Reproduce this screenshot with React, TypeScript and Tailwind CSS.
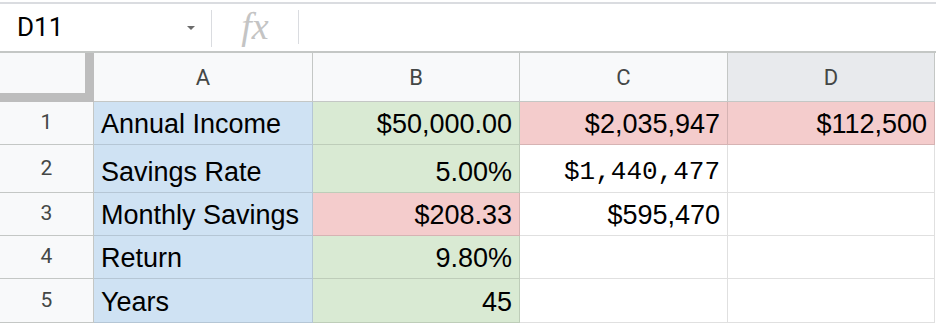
import React from 'react';

type Cell = {
  text?: string;
  bg?: string;
  align?: 'left' | 'right';
  mono?: boolean;
};

const colWidths = ['w-[219px]', 'w-[207px]', 'w-[208px]', 'w-[207px]'];
const rowHeights = ['h-[43px]', 'h-[48px]', 'h-[43px]', 'h-[43px]', 'h-[44px]'];

const rows: Cell[][] = [
  [
    { text: 'Annual Income', bg: 'bg-[#cfe2f3]' },
    { text: '$50,000.00', bg: 'bg-[#d9ead3]', align: 'right' },
    { text: '$2,035,947', bg: 'bg-[#f4cccc]', align: 'right' },
    { text: '$112,500', bg: 'bg-[#f4cccc]', align: 'right' },
  ],
  [
    { text: 'Savings Rate', bg: 'bg-[#cfe2f3]' },
    { text: '5.00%', bg: 'bg-[#d9ead3]', align: 'right' },
    { text: '$1,440,477', align: 'right', mono: true },
    {},
  ],
  [
    { text: 'Monthly Savings', bg: 'bg-[#cfe2f3]' },
    { text: '$208.33', bg: 'bg-[#f4cccc]', align: 'right' },
    { text: '$595,470', align: 'right' },
    {},
  ],
  [
    { text: 'Return', bg: 'bg-[#cfe2f3]' },
    { text: '9.80%', bg: 'bg-[#d9ead3]', align: 'right' },
    {},
    {},
  ],
  [
    { text: 'Years', bg: 'bg-[#cfe2f3]' },
    { text: '45', bg: 'bg-[#d9ead3]', align: 'right' },
    {},
    {},
  ],
];

const FormulaBar = () => (
  <div className="mt-[2px] h-[51px] flex items-center border-t-2 border-b-2 border-t-[#dadce0] border-b-[#c4c7c5] bg-white">
    <div className="w-[211px] h-full flex items-center pl-[17px] pr-[16px]">
      <span className="flex-1 text-[26px] text-black font-['Roboto',sans-serif]">D11</span>
      <span className="w-0 h-0 border-l-[4px] border-r-[4px] border-t-[4px] border-l-transparent border-r-transparent border-t-[#6b6b6b]" />
    </div>
    <div className="w-px h-[37px] bg-[#dadce0] self-start mt-[6px]" />
    <div className="w-[86px] flex justify-center">
      <span className="italic text-[38px] leading-none text-[#c4c4c4] font-['Liberation_Serif',serif] -mt-[4px]">fx</span>
    </div>
    <div className="w-px h-[34px] bg-[#dadce0] self-start mt-[6px]" />
  </div>
);

const HeaderRow = () => (
  <div className="flex h-[49px] font-['Roboto',sans-serif] text-[22px] text-[#444746]">
    <div className="w-[94px] h-full bg-[#f8f9fa] border-r-[9px] border-b-[9px] border-[#bdbdbd]" />
    {['A', 'B', 'C', 'D'].map((l, i) => (
      <div
        key={l}
        className={`${colWidths[i]} h-full flex items-center justify-center border-r border-b border-[#c4c7c5] ${
          l === 'D' ? 'bg-[#e8eaed]' : 'bg-[#f8f9fa]'
        }`}
      >
        {l}
      </div>
    ))}
  </div>
);

export default function App() {
  return (
    <div className="w-[936px] h-[324px] overflow-hidden bg-white">
      <FormulaBar />
      <HeaderRow />
      {rows.map((row, r) => (
        <div key={r} className={`flex ${rowHeights[r]}`}>
          <div className="w-[94px] h-full flex items-center justify-center bg-[#f8f9fa] border-r border-b border-[#c4c7c5] text-[21px] text-[#444746] font-['Roboto',sans-serif]">
            {r + 1}
          </div>
          {row.map((cell, c) => (
            <div
              key={c}
              className={`${colWidths[c]} h-full flex items-end px-[7px] pb-[6px] border-r border-b border-black/[0.12] text-black leading-[27px] ${
                cell.bg ?? 'bg-white'
              } ${cell.align === 'right' ? 'justify-end' : 'justify-start'} ${
                cell.mono
                  ? "font-['Liberation_Mono',monospace] text-[26px]"
                  : "font-['Liberation_Sans',Arial,sans-serif] text-[27px]"
              }`}
            >
              {cell.text}
            </div>
          ))}
        </div>
      ))}
    </div>
  );
}
